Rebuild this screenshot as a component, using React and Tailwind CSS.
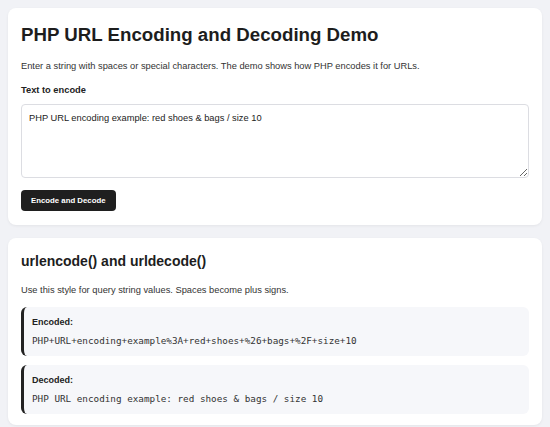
import React, { useState } from "react";

const phpUrlencode = (str) =>
  encodeURIComponent(str)
    .replace(/!/g, "%21")
    .replace(/'/g, "%27")
    .replace(/\(/g, "%28")
    .replace(/\)/g, "%29")
    .replace(/\*/g, "%2A")
    .replace(/~/g, "%7E")
    .replace(/%20/g, "+");

const phpUrldecode = (str) => decodeURIComponent(str.replace(/\+/g, "%20"));

const ResultBox = ({ label, value }) => (
  <div className="bg-[#f6f7fa] border-l-[3px] border-[#222] rounded-[6px] pl-[8px] pr-[10px] pt-[9px] pb-[9px]">
    <div className="text-[9px] font-bold text-[#222] leading-[12px]">{label}</div>
    <div className="mt-[7px] font-['DejaVu_Sans_Mono',monospace] text-[9.3px] text-[#333] leading-[12px] break-all">
      {value}
    </div>
  </div>
);

const App = () => {
  const [text, setText] = useState("PHP URL encoding example: red shoes & bags / size 10");
  const [encoded, setEncoded] = useState(phpUrlencode(text));

  const handleEncode = () => setEncoded(phpUrlencode(text));

  return (
    <div className="min-h-[427px] bg-[#f1f2f6] p-[8px] font-['Liberation_Sans',Arial,sans-serif] text-[#222] flex flex-col gap-[13px]">
      <div className="bg-white rounded-[8px] shadow-[0_1px_3px_rgba(0,0,0,0.06)] px-[13px] pt-[15px] pb-[14px]">
        <h1 className="text-[18.7px] font-bold leading-[24px] text-[#1d1d1d]">
          PHP URL Encoding and Decoding Demo
        </h1>
        <p className="mt-[13px] text-[9.3px] leading-[12px] text-[#333]">
          Enter a string with spaces or special characters. The demo shows how PHP encodes it for URLs.
        </p>
        <label className="block mt-[12px] text-[9.3px] font-bold leading-[12px] text-[#222]">
          Text to encode
        </label>
        <textarea
          value={text}
          onChange={(e) => setText(e.target.value)}
          className="mt-[8px] block w-full h-[74px] border border-[#dcdde2] rounded-[4px] px-[7px] pt-[7px] pb-[7px] text-[9.3px] leading-[12px] text-[#222] outline-none"
        />
        <button
          onClick={handleEncode}
          className="mt-[12px] bg-[#1f1f1f] text-white text-[7.8px] font-bold rounded-[4px] h-[21px] px-[10px]"
        >
          Encode and Decode
        </button>
      </div>

      <div className="bg-white rounded-[8px] shadow-[0_1px_3px_rgba(0,0,0,0.06)] px-[13px] pt-[14px] pb-[11px]">
        <h2 className="text-[14px] font-bold leading-[18px] text-[#1d1d1d]">urlencode() and urldecode()</h2>
        <p className="mt-[14px] text-[9.3px] leading-[12px] text-[#333]">
          Use this style for query string values. Spaces become plus signs.
        </p>
        <div className="mt-[11px] flex flex-col gap-[9px]">
          <ResultBox label="Encoded:" value={encoded} />
          <ResultBox label="Decoded:" value={phpUrldecode(encoded)} />
        </div>
      </div>
    </div>
  );
};

export default App;
